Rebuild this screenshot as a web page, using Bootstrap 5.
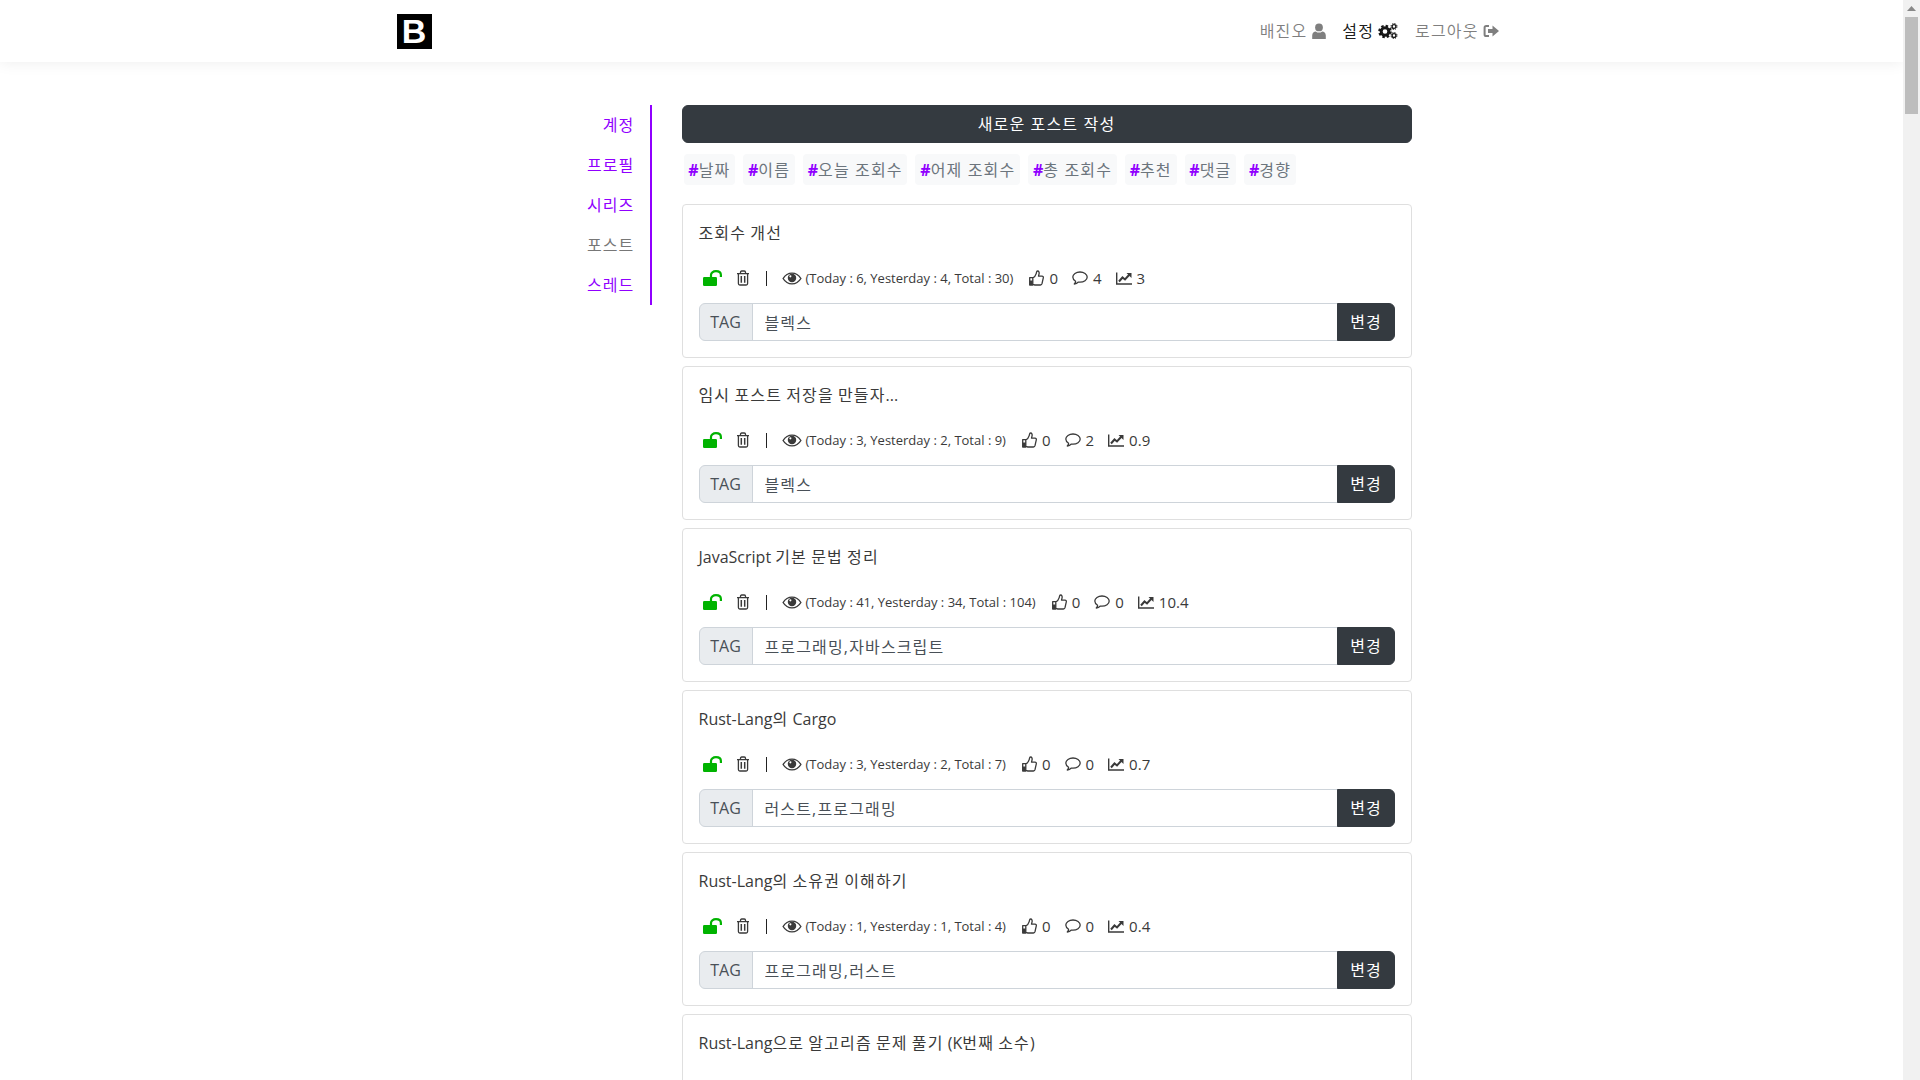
<!DOCTYPE html>
<html lang="ko">

<head>
    <meta charset="UTF-8">
    <meta name="viewport" content="width=device-width, initial-scale=1.0">
    <title>Settings - Posts</title>
    <link href="https://cdn.jsdelivr.net/npm/bootstrap@5.3.3/dist/css/bootstrap.min.css" rel="stylesheet" crossorigin="anonymous">
    <style>
        html, body {
            height: 100%;
            overflow: hidden;
        }

        body {
            font-family: "Open Sans", "Noto Sans CJK KR", sans-serif;
            color: #3a3a3a;
        }

        /* hangul in the picture runs wider than Noto CJK */
        .ko {
            letter-spacing: 1.15px;
        }

        .page-area {
            width: 1903px;
            height: 1080px;
            overflow: hidden;
        }

        .page-box {
            width: 1140px;
            margin: 0 auto;
            padding: 0 15px;
        }

        .page-row {
            --bs-gutter-x: 30px;
        }

        .top-nav {
            height: 62px;
            background: #fff;
            box-shadow: 0 0 15px rgba(0, 0, 0, .08);
            position: relative;
        }

        .logo-box {
            width: 35px;
            height: 35px;
            background: #000;
            color: #fff;
            font: 700 34px/35px "Liberation Sans", sans-serif;
            text-align: center;
            text-decoration: none;
        }

        .top-link {
            color: rgba(0, 0, 0, .5);
            text-decoration: none;
            padding: 0 8px;
            display: flex;
            align-items: center;
            gap: 4px;
        }

        .top-link.on {
            color: rgba(0, 0, 0, .9);
            margin: 0 1px 0 -1px;
        }

        .side-menu {
            margin-top: 43px;
            border-right: 2px solid #9000ff;
        }

        .side-link {
            display: block;
            height: 40px;
            line-height: 40px;
            padding: 0 15px 0 16px;
            text-align: right;
            color: #9000ff;
            text-decoration: none;
        }

        .side-link.off {
            color: #777;
        }

        .main-col {
            margin-top: 43px;
        }

        .write-btn, .save-btn {
            background: #343a40;
            border-color: #343a40;
            color: #fff;
        }

        .write-btn {
            height: 38px;
        }

        .tag-list {
            margin: 11px 0 0 2px;
            gap: 8px;
        }

        .sort-tag {
            height: 31px;
            line-height: 32px;
            padding: 0 4.800px;
            background: #f8f9fa;
            border-radius: 4px;
            color: #6c757d;
        }

        .sort-tag b {
            color: #9000ff;
            letter-spacing: 0;
        }

        .post-box {
            height: 154px;
            margin-bottom: 8px;
            padding: 16px;
            border: 1px solid #dfdfdf;
            border-radius: 4px;
        }

        .post-list {
            margin-top: 19px;
        }

        .post-title {
            line-height: 24px;
            height: 24px;
        }

        .stat-row {
            height: 26px;
            margin: 20px 0 12px;
            font-size: 15px;
        }

        .stat-row svg {
            display: block;
            flex: none;
        }

        .stat-text {
            font-size: 13px;
            line-height: 28px;
            margin-left: 4px;
            margin-right: 16px;
        }

        .stat-num {
            margin: 0 14px 0 5px;
        }

        .sep {
            width: 1px;
            height: 15px;
            background: #222;
            margin: 0 15px 0 16px;
        }

        .tag-group {
            height: 38px;
        }

        .tag-group .form-control {
            color: #495057;
            background: #fff;
            border-color: #ced4da;
            letter-spacing: 1.15px;
            padding-top: 7px;
            padding-bottom: 5px;
        }

        .tag-group .input-group-text {
            width: 54px;
            justify-content: center;
            color: #495057;
            background: #e9ecef;
            border-color: #ced4da;
            padding: 0;
        }

        .save-btn {
            width: 58px;
            padding: 0 0 0 1px;
        }

        .fake-scroll {
            width: 17px;
            height: 1080px;
            background: #f1f1f1;
            flex: none;
        }

        .scroll-arrow {
            height: 17px;
            padding-top: 6px;
        }

        .scroll-thumb {
            width: 13px;
            height: 97px;
            background: #bdbdbd;
            margin: 0 auto;
        }
    </style>
</head>

<body class="d-flex">
    <svg width="0" height="0" class="position-absolute">
        <symbol id="i-user" viewBox="0 0 16 16"><circle cx="8" cy="4.4" r="3.9" fill="currentColor"/><path d="M1.2 16V12.5C1.2 9.9 3 8.4 4.8 8.4 5.8 9.2 6.8 9.6 8 9.6S10.200 9.200 11.200 8.400C13 8.400 14.800 9.900 14.800 12.500V16Z" fill="currentColor"/></symbol>
        <symbol id="i-cogs" viewBox="0 0 20 16">
            <circle cx="7" cy="8.500" r="3.800" fill="none" stroke="currentColor" stroke-width="3"/>
            <circle cx="7" cy="8.500" r="5.800" fill="none" stroke="currentColor" stroke-width="2" stroke-dasharray="2.500 2.050"/>
            <circle cx="16" cy="3.500" r="1.900" fill="none" stroke="currentColor" stroke-width="1.400"/>
            <circle cx="16" cy="3.500" r="3" fill="none" stroke="currentColor" stroke-width="1" stroke-dasharray="1.300 1.060"/>
            <circle cx="16" cy="12.500" r="1.900" fill="none" stroke="currentColor" stroke-width="1.400"/>
            <circle cx="16" cy="12.500" r="3" fill="none" stroke="currentColor" stroke-width="1" stroke-dasharray="1.300 1.060"/>
        </symbol>
        <symbol id="i-signout" viewBox="0 0 16 14"><path d="M6 2H3.200C2.300 2 1.600 2.700 1.600 3.600V10.400C1.600 11.300 2.300 12 3.200 12H6" fill="none" stroke="currentColor" stroke-width="2"/><path d="M5 5H9.500V1.500L16 7 9.500 12.500V9H5Z" fill="currentColor"/></symbol>
        <symbol id="i-unlock" viewBox="0 0 19 16"><path d="M8 8V5C8 2.800 10 1.200 13 1.200S17.900 2.800 17.900 5V7" fill="none" stroke="currentColor" stroke-width="2.200"/><rect x="0" y="7" width="14" height="9" rx="1.200" fill="currentColor"/></symbol>
        <symbol id="i-trash" viewBox="0 0 14 16"><path d="M1 3.700H13M4.500 3.700V2.300C4.500 1.500 5 1 5.700 1H8.300C9 1 9.500 1.500 9.500 2.300V3.700M2.400 3.700V13.500C2.400 14.400 3 15 3.800 15H10.200C11 15 11.600 14.400 11.600 13.500V3.700" fill="none" stroke="currentColor" stroke-width="1.300"/><path d="M5.300 6V12.700M8.700 6V12.700" stroke="currentColor" stroke-width="1.500"/></symbol>
        <symbol id="i-eye" viewBox="0 0 18 12"><path d="M.8 6C2.800 2.700 5.700 1 9 1S15.200 2.700 17.200 6C15.200 9.300 12.300 11 9 11S2.800 9.300 .8 6Z" fill="none" stroke="currentColor" stroke-width="1.300"/><circle cx="9" cy="5.500" r="3.900" fill="currentColor"/><circle cx="7.500" cy="4" r="1" fill="#fff"/></symbol>
        <symbol id="i-thumb" viewBox="0 0 15 16"><path d="M.7 7.600H3.800V15H.7ZM3.800 8C5.200 7.200 6.600 5.700 7.200 3.600 7.500 2.400 7.500 1 8.500 1 10 1 10.400 2.600 10 4.200L9.500 6.200H13C14 6.200 14.500 7 14.300 7.800L13 13.700C12.800 14.500 12.300 15 11.500 15H6.500C5.400 15 4.700 14.400 3.800 14.200" fill="none" stroke="currentColor" stroke-width="1.300" stroke-linejoin="round"/><path d="M.7 10.500H3.800V15H.7Z" fill="currentColor"/></symbol>
        <symbol id="i-comment" viewBox="0 0 16 14"><path d="M8 1C4.100 1 .8 3.200 .8 6.100 .8 7.800 1.900 9.200 3.600 10.200 3.500 11.300 3 12.200 2.300 13 3.900 12.800 5.300 12.100 6.400 11.100 6.900 11.200 7.500 11.200 8 11.200 11.900 11.200 15.200 9 15.200 6.100S11.900 1 8 1Z" fill="none" stroke="currentColor" stroke-width="1.300" stroke-linejoin="round"/></symbol>
        <symbol id="i-chart" viewBox="0 0 16 13"><path d="M.7 .5V12H16" fill="none" stroke="currentColor" stroke-width="1.400"/><path d="M3 9.500 6.500 5.500 9 7.500 13.500 2.500" fill="none" stroke="currentColor" stroke-width="2"/><path d="M10.500 1H15.500V6Z" fill="currentColor"/></symbol>
    </svg>

    <div class="page-area">
        <nav class="top-nav">
            <div class="page-box h-100 d-flex align-items-center justify-content-between">
                <a class="logo-box" href="#">B</a>
                <div class="d-flex">
                    <a class="top-link" href="#"><span class="ko">배진오</span> <svg width="16" height="16"><use href="#i-user"/></svg></a>
                    <a class="top-link on" href="#"><span class="ko">설정</span> <svg width="20" height="16"><use href="#i-cogs"/></svg></a>
                    <a class="top-link" href="#"><span class="ko">로그아웃</span> <svg width="16" height="14"><use href="#i-signout"/></svg></a>
                </div>
            </div>
        </nav>

        <div class="page-box">
            <div class="row page-row">
                <div class="col-2 offset-1">
                    <div class="side-menu ko">
                        <a class="side-link" href="#">계정</a>
                        <a class="side-link" href="#">프로필</a>
                        <a class="side-link" href="#">시리즈</a>
                        <a class="side-link off" href="#">포스트</a>
                        <a class="side-link" href="#">스레드</a>
                    </div>
                </div>
                <div class="col-8 main-col">
                    <button class="btn write-btn w-100 py-0 ko">새로운 포스트 작성</button>
                    <div class="d-flex tag-list" id="tag-list"></div>
                    <div class="post-list" id="post-list"></div>
                </div>
            </div>
        </div>
    </div>

    <div class="fake-scroll">
        <div class="scroll-arrow d-flex justify-content-center">
            <svg width="9" height="5"><path d="M4.500 0 9 5H0Z" fill="#888"/></svg>
        </div>
        <div class="scroll-thumb"></div>
    </div>

    <script>
        const tags = ['날짜', '이름', '오늘 조회수', '어제 조회수', '총 조회수', '추천', '댓글', '경향'];
        const posts = [
            { title: '조회수 개선', today: 6, yesterday: 4, total: 30, likes: 0, comments: 4, trend: '3', tag: '블렉스' },
            { title: '임시 포스트 저장을 만들자...', today: 3, yesterday: 2, total: 9, likes: 0, comments: 2, trend: '0.9', tag: '블렉스' },
            { title: 'JavaScript 기본 문법 정리', today: 41, yesterday: 34, total: 104, likes: 0, comments: 0, trend: '10.4', tag: '프로그래밍,자바스크립트' },
            { title: 'Rust-Lang의 Cargo', today: 3, yesterday: 2, total: 7, likes: 0, comments: 0, trend: '0.7', tag: '러스트,프로그래밍' },
            { title: 'Rust-Lang의 소유권 이해하기', today: 1, yesterday: 1, total: 4, likes: 0, comments: 0, trend: '0.4', tag: '프로그래밍,러스트' },
            { title: 'Rust-Lang으로 알고리즘 문제 풀기 (K번째 소수)' }  // below the fold from here on
        ];

        function icon(name, w, h, extra) {
            return `<svg width="${w}" height="${h}" ${extra || ''}><use href="#i-${name}"/></svg>`;
        }

        // wrap the hangul runs so only they get the wider spacing
        function koText(text) {
            return text.replace(/[가-힣]+/g, m => `<span class="ko">${m}</span>`);
        }

        function postBody(p) {
            if (p.today === undefined) return '';
            return `
                <div class="stat-row d-flex align-items-center">
                    <span class="ms-1">${icon('unlock', 19, 16, 'style="color:#00b300"')}</span>
                    <span style="margin-left:14px">${icon('trash', 14, 16)}</span>
                    <span class="sep"></span>
                    ${icon('eye', 20, 13)}
                    <span class="stat-text">(Today : ${p.today}, Yesterday : ${p.yesterday}, Total : ${p.total})</span>
                    ${icon('thumb', 15, 16)}<span class="stat-num">${p.likes}</span>
                    ${icon('comment', 16, 14)}<span class="stat-num">${p.comments}</span>
                    ${icon('chart', 16, 13)}<span class="stat-num">${p.trend}</span>
                </div>
                <div class="input-group tag-group">
                    <span class="input-group-text">TAG</span>
                    <input type="text" class="form-control" value="${p.tag}">
                    <button class="btn save-btn ko">변경</button>
                </div>`;
        }

        document.getElementById('tag-list').innerHTML = tags
            .map(t => `<span class="sort-tag ko"><b>#</b>${t}</span>`)
            .join('');

        document.getElementById('post-list').innerHTML = posts.map(p => `
            <div class="post-box">
                <div class="post-title">${koText(p.title)}</div>
                ${postBody(p)}
            </div>`).join('');
    </script>

    <script src="https://cdn.jsdelivr.net/npm/bootstrap@5.3.3/dist/js/bootstrap.bundle.min.js" crossorigin="anonymous"></script>
</body>

</html>
